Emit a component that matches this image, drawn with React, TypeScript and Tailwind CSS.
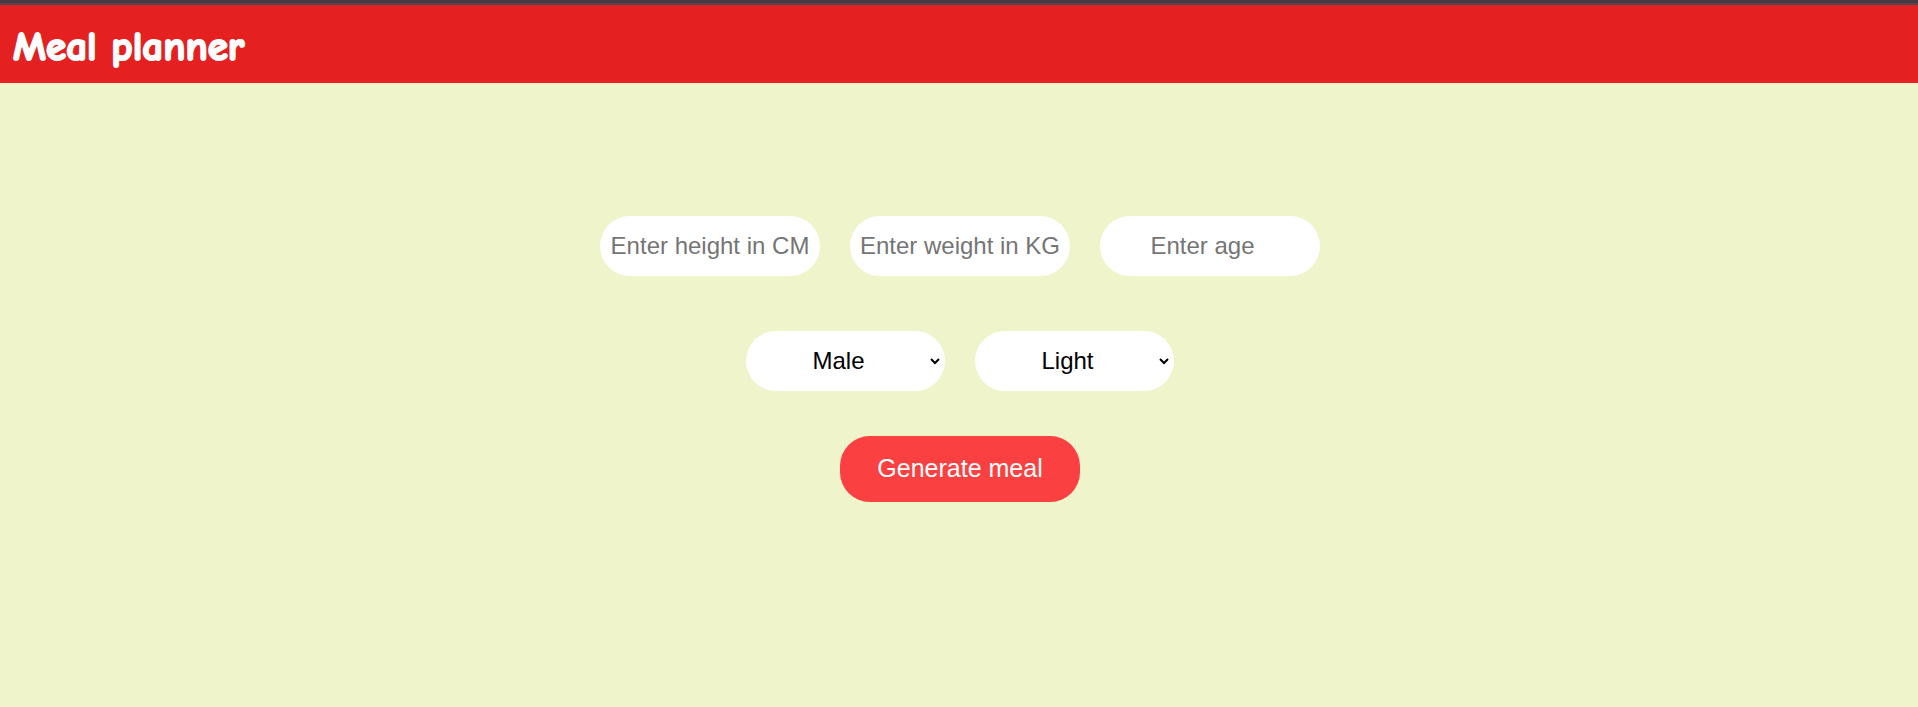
import React, { useState } from "react";

const fieldClass =
  "h-[60px] rounded-[30px] bg-white text-center text-2xl outline-none";
const inputClass = `${fieldClass} w-[220px] px-0.5 text-black placeholder:text-[#757575]`;
const selectClass = `${fieldClass} w-[199px] border-r-2 border-white pb-0.5 text-black`;

type Field = { id: string; label: string; type: "text" | "number" };

const fields: Field[] = [
  { id: "height", label: "Enter height in CM", type: "text" },
  { id: "weight", label: "Enter weight in KG", type: "text" },
  { id: "age", label: "Enter age", type: "number" },
];

export default function App() {
  const [values, setValues] = useState<Record<string, string>>({});

  return (
    <div className="flex min-h-screen flex-col border-t-[3px] border-[#483747] bg-[#f0f4cb] font-['Liberation_Sans',Arial,sans-serif]">
      <header className="flex h-20 items-center border-t-2 border-[#52474f] bg-[#e52020] px-[13px] pt-1.5">
        <h1 className="font-['Comic_Sans_MS','Comic_Neue','Lato',cursive] text-[41px] font-bold leading-[56px] text-white [-webkit-text-stroke:2px_white]">
          Meal planner
        </h1>
      </header>
      <main className="flex grow flex-col items-center pt-[133px] pl-0.5">
        <form
          className="flex flex-col items-center"
          onSubmit={(event) => event.preventDefault()}
        >
          <div className="flex flex-wrap justify-center gap-[30px]">
            {fields.map(({ id, label, type }) => (
              <input
                key={id}
                id={id}
                type={type}
                aria-label={label}
                placeholder={label}
                className={inputClass}
                value={values[id] ?? ""}
                onChange={(event) =>
                  setValues({ ...values, [id]: event.target.value })
                }
              />
            ))}
          </div>
          <div className="mt-[55px] flex flex-wrap justify-center gap-[30px]">
            <select aria-label="Gender" className={selectClass}>
              <option>Male</option>
              <option>Female</option>
            </select>
            <select aria-label="Activity level" className={selectClass}>
              <option>Light</option>
              <option>Moderate</option>
              <option>Active</option>
            </select>
          </div>
          <button
            type="submit"
            className="mt-[45px] h-[66px] w-[240px] cursor-pointer rounded-[30px] bg-[#fa4040] text-[25px] text-white"
          >
            Generate meal
          </button>
        </form>
      </main>
    </div>
  );
}
